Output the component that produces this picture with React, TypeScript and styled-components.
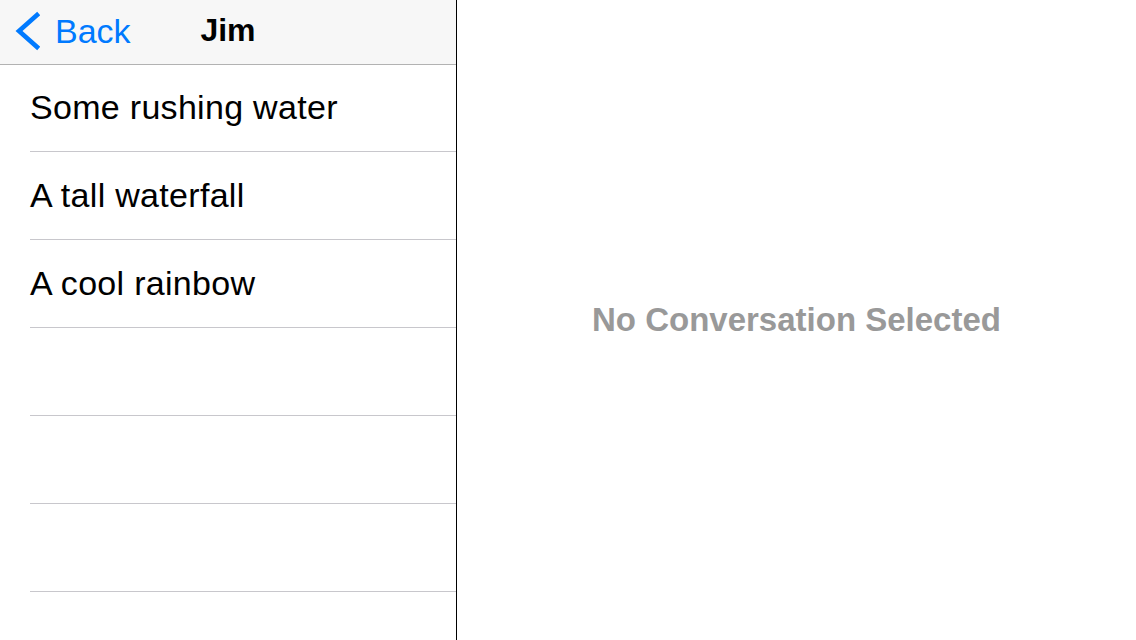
import styled, { createGlobalStyle } from 'styled-components'

const GlobalStyle = createGlobalStyle`
  html, body {
    margin: 0;
    padding: 0;
    background: #ffffff;
    overflow: hidden;
  }
  body {
    font-family: "Liberation Sans", Arial, Helvetica, sans-serif;
  }
`

const items = ['Some rushing water', 'A tall waterfall', 'A cool rainbow', '', '', '', '']

const App = () => {
  return (
    <Screen>
      <GlobalStyle />
      <Sidebar>
        <NavBar>
          <BackButton>
            <svg width="26" height="40" viewBox="0 0 26 40">
              <path d="M23 4 L5 20 L23 36" fill="none" stroke="#007aff" strokeWidth="4.6" strokeLinecap="square" strokeLinejoin="miter" />
            </svg>
            <BackLabel>Back</BackLabel>
          </BackButton>
          <Title>Jim</Title>
        </NavBar>
        <List>
          {items.map((label, i) => (
            <Row key={i}>{label}</Row>
          ))}
        </List>
      </Sidebar>
      <Detail>
        <EmptyText>No Conversation Selected</EmptyText>
      </Detail>
    </Screen>
  )
}

export default App

const Screen = styled.div`
  display: flex;
  width: 1136px;
  height: 640px;
  overflow: hidden;
`
const Sidebar = styled.div`
  width: 456px;
  flex-shrink: 0;
  border-right: 1px solid #000000;
  display: flex;
  flex-direction: column;
  overflow: hidden;
`
const NavBar = styled.div`
  position: relative;
  z-index: 1;
  height: 64px;
  flex-shrink: 0;
  background: #f7f7f7;
  box-shadow: 0 1px 0 #b2b2b2;
  display: flex;
  align-items: center;
  justify-content: center;
`
const BackButton = styled.div`
  position: absolute;
  left: 14px;
  top: 10px;
  display: flex;
  align-items: center;
  gap: 15px;
  color: #007aff;
`
const BackLabel = styled.span`
  font-size: 34px;
  line-height: 40px;
  margin-top: 1px;
`
const Title = styled.div`
  font-size: 32px;
  font-weight: bold;
  color: #000000;
  margin-top: -3px;
`
const List = styled.div`
  display: flex;
  flex-direction: column;
`
const Row = styled.div`
  box-sizing: border-box;
  height: 88px;
  flex-shrink: 0;
  margin-left: 30px;
  border-bottom: 1px solid #c8c7cc;
  display: flex;
  align-items: center;
  font-size: 34px;
  letter-spacing: 0.3px;
  color: #000000;
  padding-bottom: 1px;
`
const Detail = styled.div`
  flex: 1;
  display: flex;
  align-items: center;
  justify-content: center;
`
const EmptyText = styled.div`
  font-size: 33px;
  font-weight: bold;
  color: #999999;
  margin-top: 0px;
`
